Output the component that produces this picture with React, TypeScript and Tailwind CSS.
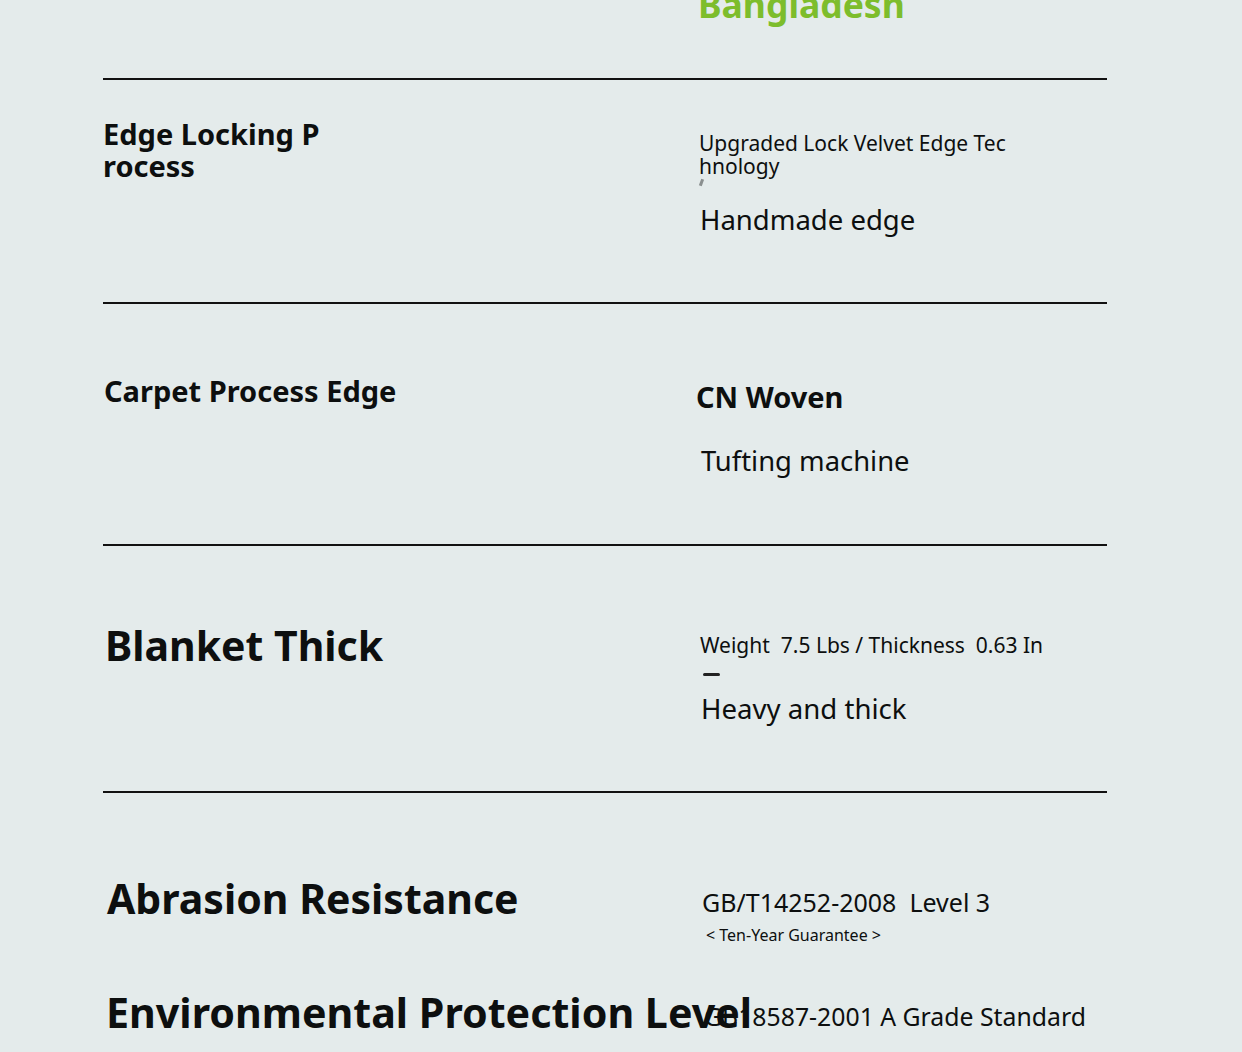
const rule = "h-[2px] bg-[#111]";

function Row({
  left,
  right,
  height,
}: {
  left: React.ReactNode;
  right: React.ReactNode;
  height: number;
}) {
  return (
    <div className="grid grid-cols-[595px_1fr]" style={{ height }}>
      <div>{left}</div>
      <div>{right}</div>
    </div>
  );
}

export default function App() {
  return (
    <div
      className="h-[1052px] w-[1242px] overflow-hidden bg-[#e4ebeb] text-[#0d0f0f]"
      style={{ fontFamily: '"Noto Sans", "Open Sans", sans-serif' }}
    >
      <div className="ml-[103px] w-[1004px]">
        {/* header tail */}
        <div className="flex h-[78px] flex-col">
          <div className="ml-[595px] -mt-[18px] text-[35.5px] font-bold leading-[44px] text-[#7dbd2c]">
            Bangladesh
          </div>
        </div>
        <div className={rule} />

        <Row
          height={222}
          left={
            <div className="mt-[38px] text-[29px] font-bold leading-[32px]">
              Edge Locking P
              <br />
              rocess
            </div>
          }
          right={
            <div className="pt-[52px]">
              <div className="ml-[1px] text-[21px] leading-[23px]">
                Upgraded Lock Velvet Edge Tec
                <br />
                hnology
              </div>
              <div className="ml-[2px] mt-[1px] h-[7px] w-[3px] rotate-[20deg] bg-[#8a8f8f]" />
              <div className="ml-[2px] mt-[16px] text-[27.5px] leading-[36px]">
                Handmade edge
              </div>
            </div>
          }
        />
        <div className={rule} />

        <Row
          height={240}
          left={
            <div className="ml-[1px] mt-[69px] text-[29px] font-bold leading-[36px]">
              Carpet Process Edge
            </div>
          }
          right={
            <div className="pt-[75px]">
              <div className="-ml-[2px] text-[29px] font-bold leading-[36px]">
                CN Woven
              </div>
              <div className="ml-[3px] mt-[28px] text-[27.4px] leading-[36px]">
                Tufting machine
              </div>
            </div>
          }
        />
        <div className={rule} />

        <Row
          height={245}
          left={
            <div className="ml-[2px] mt-[73px] text-[41px] font-bold leading-[52px]">
              Blanket Thick
            </div>
          }
          right={
            <div className="pt-[86px]">
              <div className="ml-[2px] whitespace-pre text-[21px] leading-[26px]">
                {"Weight  7.5 Lbs / Thickness  0.63 In"}
              </div>
              <div className="ml-[5px] mt-[15px] h-[3px] w-[17px] rounded-sm bg-[#222]" />
              <div className="ml-[3px] mt-[14px] text-[27.6px] leading-[36px]">
                Heavy and thick
              </div>
            </div>
          }
        />
        <div className={rule} />

        <div className="grid grid-cols-[595px_1fr]">
          <div>
            <div className="ml-[4px] mt-[79px] whitespace-nowrap text-[41px] font-bold leading-[52px]">
              Abrasion Resistance
            </div>
            <div className="relative z-10 ml-[3px] mt-[62px] whitespace-nowrap text-[41.2px] font-bold leading-[52px]">
              Environmental Protection Level
            </div>
          </div>
          <div className="pt-[93px]">
            <div className="ml-[4px] whitespace-pre text-[25px] leading-[32px]">
              {"GB/T14252-2008  Level 3"}
            </div>
            <div className="ml-[8px] mt-[7px] text-[16px] leading-[20px]">
              {"< Ten-Year Guarantee >"}
            </div>
            <div className="ml-[6px] mt-[55px] whitespace-nowrap text-[24.8px] leading-[32px]">
              GB18587-2001 A Grade Standard
            </div>
          </div>
        </div>
      </div>
    </div>
  );
}
